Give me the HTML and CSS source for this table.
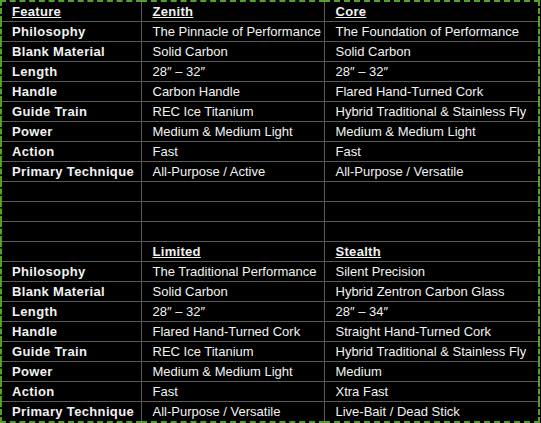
FILE: index.html
```html
<!DOCTYPE html>
<html>
<head>
<meta charset="utf-8">
<link rel="stylesheet" href="styles.css">
</head>
<body>
<table class="spec">
<colgroup><col class="c1"><col class="c2"><col class="c3"></colgroup>
<tbody>
<tr><td class="hd first">Feature</td><td class="hd">Zenith</td><td class="hd">Core</td></tr>
<tr><th>Philosophy</th><td>The Pinnacle of Performance</td><td>The Foundation of Performance</td></tr>
<tr><th>Blank Material</th><td>Solid Carbon</td><td>Solid Carbon</td></tr>
<tr><th>Length</th><td>28″ – 32″</td><td>28″ – 32″</td></tr>
<tr><th>Handle</th><td>Carbon Handle</td><td>Flared Hand-Turned Cork</td></tr>
<tr><th>Guide Train</th><td>REC Ice Titanium</td><td>Hybrid Traditional &amp; Stainless Fly</td></tr>
<tr><th>Power</th><td>Medium &amp; Medium Light</td><td>Medium &amp; Medium Light</td></tr>
<tr><th>Action</th><td>Fast</td><td>Fast</td></tr>
<tr><th>Primary Technique</th><td>All-Purpose / Active</td><td>All-Purpose / Versatile</td></tr>
<tr><th></th><td></td><td></td></tr>
<tr><th></th><td></td><td></td></tr>
<tr><th></th><td></td><td></td></tr>
<tr><th></th><td class="hd">Limited</td><td class="hd">Stealth</td></tr>
<tr><th>Philosophy</th><td>The Traditional Performance</td><td>Silent Precision</td></tr>
<tr><th>Blank Material</th><td>Solid Carbon</td><td>Hybrid Zentron Carbon Glass</td></tr>
<tr><th>Length</th><td>28″ – 32″</td><td>28″ – 34″</td></tr>
<tr><th>Handle</th><td>Flared Hand-Turned Cork</td><td>Straight Hand-Turned Cork</td></tr>
<tr><th>Guide Train</th><td>REC Ice Titanium</td><td>Hybrid Traditional &amp; Stainless Fly</td></tr>
<tr><th>Power</th><td>Medium &amp; Medium Light</td><td>Medium</td></tr>
<tr><th>Action</th><td>Fast</td><td>Xtra Fast</td></tr>
<tr><th>Primary Technique</th><td>All-Purpose / Versatile</td><td>Live-Bait / Dead Stick</td></tr>
</tbody>
</table>
</body>
</html>
```
FILE: styles.css
```css
html, body {
  margin: 0;
  padding: 0;
  background: #000;
}
.spec {
  border-collapse: collapse;
  table-layout: fixed;
  width: 540px;
  border: 2px dashed #55a02a;
  font-family: "Liberation Sans", Arial, sans-serif;
  font-size: 13px;
  color: #f2f2f2;
}
.c1 { width: 140px; }
.c2 { width: 183px; }
.c3 { width: 215px; }
.spec td, .spec th {
  border: 1px solid #5a5a5a;
  height: 19px;
  padding: 0 0 0 11px;
  text-align: left;
  white-space: nowrap;
  vertical-align: middle;
  line-height: 15px;
}
.spec th, .spec td.first {
  padding-left: 10px;
}
.spec th {
  font-weight: bold;
  letter-spacing: 0.35px;
}
.spec td.hd {
  font-weight: bold;
  text-decoration: underline;
  letter-spacing: 0.3px;
}
```
